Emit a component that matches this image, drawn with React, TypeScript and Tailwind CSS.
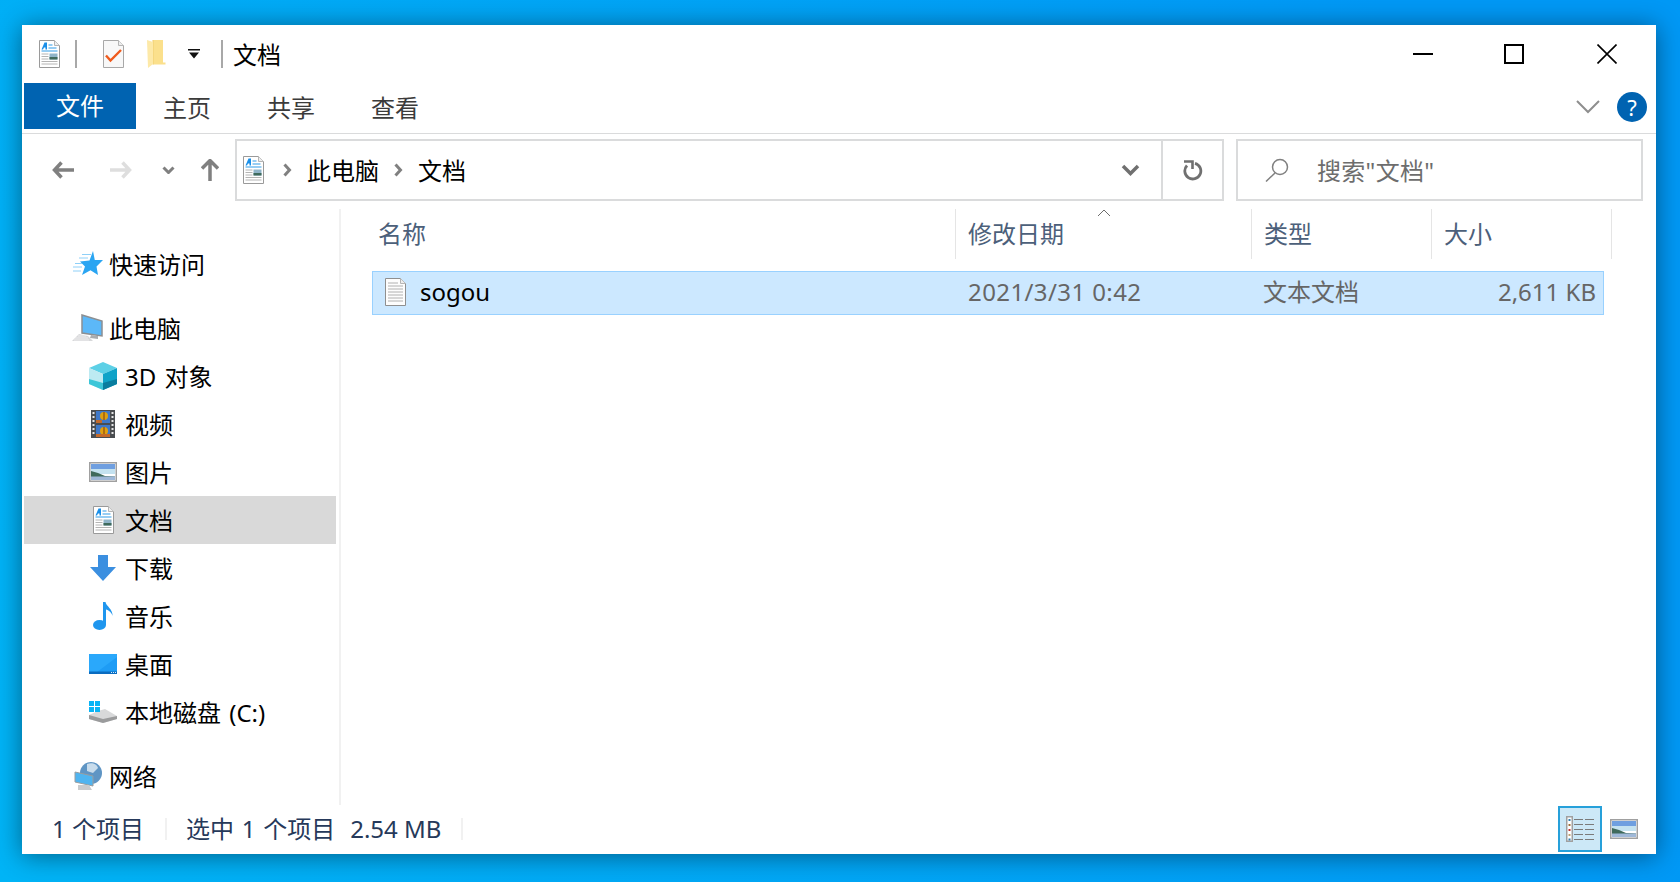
import { FC, ReactNode } from "react";

const font = "font-['Noto_Sans','Noto_Sans_CJK_SC',sans-serif]";

// shell32-ish icons, drawn by hand
const DocIcon: FC<{ className?: string }> = ({ className }) => (
  <svg viewBox="0 0 21 28" className={className} width="21" height="28">
    <path d="M.5.5h15l5 5v22H.5z" fill="#fff" stroke="#9a9a9a" />
    <path d="M15.5.5v5h5" fill="#eee" stroke="#b5b5b5" />
    <path d="M2.500 9.500L5.500 2.500H8V9.500H6.500V7.500H5L4 9.500z" fill="#1a8fe8" />
    <path d="M9.500 5h4M9.500 8h8M2.500 11h16" stroke="#2f9ce8" strokeWidth="1.200" />
    <path d="M2.500 14h7M2.500 16.500h7M2.500 19h7M2.500 21.500h16M2.500 24h16" stroke="#b4b4b4" strokeWidth="1" />
    <rect x="10.500" y="13.500" width="8" height="6" fill="#8fb4c8" />
    <rect x="10.500" y="17" width="8" height="2.500" fill="#3f6a5c" />
  </svg>
);

const TextFileIcon: FC = () => (
  <svg viewBox="0 0 21 28" width="21" height="28" className="mb-[2px] shrink-0">
    <path d="M.5.5h15l5 5v22H.5z" fill="#fdfdfd" stroke="#8f8f8f" />
    <path d="M15.5.5v5h5" fill="#eee" stroke="#b5b5b5" />
    <path d="M3 5h10M3 8h15M3 11h15M3 14h15M3 17h15M3 20h15M3 23h15" stroke="#b0b0b0" />
  </svg>
);

const CheckDoc: FC = () => (
  <svg viewBox="0 0 21 28" width="21" height="28">
    <path d="M.5.5h15l5 5v22H.5z" fill="#f8f8f8" stroke="#a8a8a8" />
    <path d="M15.5.5v5h5" fill="#eee" stroke="#b5b5b5" />
    <path d="M3 15.500l4.500 5L18 10" fill="none" stroke="#ef5a1c" strokeWidth="2.400" />
  </svg>
);

const QuickFolder: FC = () => (
  <svg viewBox="0 0 19 28" width="19" height="28">
    <path d="M0 0h16v22.500H18.500V24.500H6V0z" fill="#fbe08c" />
    <path d="M6 0v24.500" stroke="#f0cd70" />
    <path d="M0 0l6 2v22l-5 4z" fill="#fde9a8" />
  </svg>
);

const NavStar: FC = () => (
  <svg viewBox="0 0 30 26" width="30" height="26">
    <path d="M20 0l1.800 9H30l-6.500 6.500L25 24l-7.500-4.800L9 24l3-8.500L7 10.500l9.500-1z" fill="#2aa5f2" />
    <path d="M0 16h9M2 12.500h7M0 20h8M6 7h9M9 3.500h9" stroke="#8fd0f8" strokeWidth="1" />
  </svg>
);

const PcIcon: FC = () => (
  <svg viewBox="0 0 32 28" width="32" height="28">
    <path d="M10 1l20 6v15l-20-3z" fill="#5cb8f8" stroke="#8c8f92" strokeWidth="1.500" />
    <path d="M19 21l7 1v3l-8-1z" fill="#a9acaf" />
    <path d="M7 20l9 2 5 5H0z" fill="#d7d8da" />
    <path d="M3 24h13M2 26h15M6 22h8" stroke="#f4f4f4" strokeWidth=".8" />
  </svg>
);

const CubeIcon: FC = () => (
  <svg viewBox="0 0 28 28" width="28" height="28">
    <path d="M14 0l14 6-14 6L0 6z" fill="#5dd0e6" />
    <path d="M0 6l14 6v16L0 22z" fill="#bdeaf2" />
    <path d="M28 6L14 12v16l14-6z" fill="#0fa3c8" />
    <path d="M14 21l14-4v5l-14 6z" fill="#0a7d9f" />
    <path d="M0 17l14 4v7L0 22z" fill="#3cc6d8" />
  </svg>
);

const VideoIcon: FC = () => (
  <svg viewBox="0 0 24 28" width="24" height="28">
    <rect width="24" height="28" fill="#4a4d50" />
    <rect x="5" y="1" width="14" height="12" fill="#3f78c8" />
    <rect x="5" y="15" width="14" height="12" fill="#3f78c8" />
    <circle cx="13" cy="6" r="4" fill="#e0a010" />
    <circle cx="13" cy="21" r="4" fill="#e0a010" />
    <path d="M13 2v8M13 17v8" stroke="#7a3a10" />
    <rect x="5" y="10" width="6" height="3" fill="#c46a2a" />
    <rect x="5" y="24" width="14" height="3" fill="#c46a2a" />
    <path d="M2.500 2v24M21.500 2v24" stroke="#e6e6e6" strokeWidth="2" strokeDasharray="2 2" />
  </svg>
);

const Landscape: FC<{ w: number; h: number }> = ({ w, h }) => (
  <svg viewBox="0 0 28 20" width={w} height={h}>
    <rect x=".75" y=".75" width="26.500" height="18.500" fill="#fff" stroke="#a0a0a0" strokeWidth="1.500" />
    <rect x="2" y="2" width="24" height="6" fill="#6f9fe0" />
    <rect x="2" y="7" width="24" height="5" fill="#c4e2f0" />
    <path d="M2 9l7 2 7 3 10 .5V18H2z" fill="#3f6a5c" />
    <rect x="2" y="14.500" width="24" height="3.500" fill="#9fb8d8" />
  </svg>
);

const DownloadIcon: FC = () => (
  <svg viewBox="0 0 26 26" width="26" height="26">
    <path d="M8 0h10v12h8L13 26 0 12h8z" fill="#3b8fe0" />
  </svg>
);

const MusicIcon: FC = () => (
  <svg viewBox="0 0 20 28" width="20" height="28">
    <ellipse cx="6.500" cy="23" rx="6.500" ry="5" fill="#1f96ee" />
    <path d="M10 0h2.500c.5 4 7.500 7 7 14-.4-3-4-6-6.500-6.500V23h-3z" fill="#1f96ee" />
  </svg>
);

const DesktopIcon: FC = () => (
  <svg viewBox="0 0 28 20" width="28" height="20">
    <rect width="28" height="20" fill="#1e9cf5" />
    <path d="M0 0h28v3L8 18H0z" fill="#2aa8fb" />
    <rect y="17.500" width="28" height="2.500" fill="#0a6cc0" />
    <path d="M22 18.500h5" stroke="#d8eefc" strokeDasharray="1 1" />
  </svg>
);

const DiskIcon: FC = () => (
  <svg viewBox="0 0 28 22" width="28" height="22">
    <path d="M0 14l9-4 7-2 12 7v3l-14 4L0 18z" fill="#d8d9da" />
    <path d="M0 14l14 4 14-3v3l-14 4L0 18z" fill="#9a9b9c" />
    <path d="M0 0h5v5H0zM6 0h5v5H6zM0 6h5v5H0zM6 6h5v5H6z" fill="#08b4f6" />
  </svg>
);

const NetIcon: FC = () => (
  <svg viewBox="0 0 28 28" width="28" height="28">
    <circle cx="17" cy="11" r="11" fill="#5f95c4" />
    <path d="M13 2c5-2 10 0 11 4l-5 5-6-2z" fill="#c8dcec" />
    <path d="M1 10l18 4v10L1 20z" fill="#4fb4f0" stroke="#9a9d9f" />
    <path d="M4 23h11l3 5H4z" fill="#c9cbcd" />
  </svg>
);

const Chev: FC<{ d: string; w: number; h: number; color: string; sw?: number; className?: string }> = ({ d, w, h, color, sw = 2, className }) => (
  <svg viewBox={`0 0 ${w} ${h}`} width={w} height={h} className={className}>
    <path d={d} fill="none" stroke={color} strokeWidth={sw} />
  </svg>
);

const Arrow: FC<{ color: string; flip?: boolean }> = ({ color, flip }) => (
  <svg viewBox="0 0 22 18" width="22" height="18" className={flip ? "-scale-x-100" : ""}>
    <path d="M9.500 1.500L2.500 9l7 7.500M3 9h19" fill="none" stroke={color} strokeWidth="3.500" />
  </svg>
);

const TreeRow: FC<{ icon: ReactNode; label: string; child?: boolean; selected?: boolean }> = ({ icon, label, child, selected }) => (
  <div className={`flex h-12 items-center ${selected ? "bg-[#d9d9d9]" : ""} ${child ? "pl-[65px]" : "pl-[48px]"}`}>
    <div className={`flex h-7 shrink-0 items-center justify-center ${child ? "mr-2 w-[28px]" : "mr-[5px] w-[32px]"}`}>{icon}</div>
    <span className="pt-[2px] text-[24px] leading-none text-black [word-spacing:2px]">{label}</span>
  </div>
);

const HeaderCell: FC<{ label: string; className: string; children?: ReactNode }> = ({ label, className, children }) => (
  <div className={`relative flex h-full items-center border-r border-[#e5e5e5] ${className}`}>
    <span className="text-[24px] leading-none text-[#4c607a]">{label}</span>
    {children}
  </div>
);

export default function App() {
  return (
    <div className={`h-[882px] w-[1680px] overflow-hidden bg-[linear-gradient(70deg,#00b4f6,#0098f5_85%)] pl-[22px] pt-[25px] ${font}`}>
      <div className="flex h-[829px] w-[1634px] flex-col bg-white shadow-[0_2px_24px_rgba(0,0,0,0.45)]">
        {/* title bar */}
        <div className="flex h-[58px] shrink-0 items-center pl-[17px]">
          <DocIcon />
          <div className="ml-[15px] h-7 w-[2px] bg-[#a8a8a8]" />
          <div className="ml-[26px]"><CheckDoc /></div>
          <div className="ml-[23px]"><QuickFolder /></div>
          <svg viewBox="0 0 12 10" width="12" height="10" className="ml-[22px]">
            <path d="M0 0h12v1.500H0zM1 3.500h10L6 9.500z" fill="#111" />
          </svg>
          <div className="ml-[21px] h-7 w-[2px] bg-[#a8a8a8]" />
          <span className="ml-[10px] pt-[2px] text-[24px] leading-none text-black">文档</span>
          <div className="ml-auto flex items-center pr-[39px]">
            <div className="h-[2px] w-5 bg-black" />
            <div className="ml-[71px] h-5 w-5 border-2 border-black" />
            <svg viewBox="0 0 20 20" width="20" height="20" className="ml-[73px]">
              <path d="M.5.5l19 19M19.500.5l-19 19" stroke="#000" strokeWidth="1.600" />
            </svg>
          </div>
        </div>

        {/* ribbon tabs */}
        <div className="flex h-[51px] shrink-0 items-start border-b border-[#dadbdc] pl-[2px] pr-[9px] text-[24px] leading-none">
          <div className="flex h-[46px] w-[112px] items-center justify-center bg-[#0063b1] text-white">文件</div>
          <div className="flex h-[46px] w-[104px] items-center justify-center pr-[2px] pt-1 text-[#3b3b3b]">主页</div>
          <div className="flex h-[46px] w-[104px] items-center justify-center pr-[2px] pt-1 text-[#3b3b3b]">共享</div>
          <div className="flex h-[46px] w-[104px] items-center justify-center pr-[2px] pt-1 text-[#3b3b3b]">查看</div>
          <div className="ml-auto flex h-[46px] items-center pt-[2px]">
            <Chev d="M1 1l11 11L23 1" w={24} h={14} color="#8e8e8e" />
            <div className="ml-[17px] flex h-[30px] w-[30px] items-center justify-center rounded-full bg-[#0063b1] text-[22px] text-white">?</div>
          </div>
        </div>

        {/* address row */}
        <div className="mt-[5px] flex h-[62px] shrink-0 items-center">
          <div className="ml-[30px]"><Arrow color="#808080" /></div>
          <div className="ml-[36px]"><Arrow color="#dedede" flip /></div>
          <Chev d="M1.500 1.500l5 5 5-5" w={13} h={8} color="#808080" sw={3} className="ml-[30px]" />
          <svg viewBox="0 0 18 22" width="18" height="22" className="ml-[26px]">
            <path d="M1 9.500L9 1.500l8 8M9 2v20" fill="none" stroke="#808080" strokeWidth="3.500" />
          </svg>
          <div className="ml-[16px] flex h-[62px] w-[989px] items-center border-2 border-[#dadbdc] pl-[6px] text-[24px] leading-none text-black">
            <DocIcon />
            <Chev d="M1.500 1.500l5 5.500-5 5.500" w={9} h={14} color="#808080" sw={3} className="ml-[19px]" />
            <span className="ml-[15px] pt-[2px]">此电脑</span>
            <Chev d="M1.500 1.500l5 5.500-5 5.500" w={9} h={14} color="#808080" sw={3} className="ml-[15px]" />
            <span className="ml-[15px] pt-[2px]">文档</span>
            <Chev d="M2 2l7.500 7.500L17 2" w={19} h={12} color="#707070" sw={3.500} className="ml-auto mr-[21px]" />
            <div className="flex h-full w-[61px] items-center justify-center border-l-2 border-[#dadbdc] pl-[2px]">
              <svg viewBox="0 0 21 21" width="21" height="21">
                <path d="M12 3.300A8 8 0 1 1 4 5.500" fill="none" stroke="#707070" strokeWidth="2.800" />
                <path d="M1 1.500h8.500v7.500" fill="none" stroke="#707070" strokeWidth="2.600" />
              </svg>
            </div>
          </div>
          <div className="ml-[12px] flex h-[62px] w-[407px] items-center border-2 border-[#dadbdc] pl-[27px] text-[24px] leading-none text-[#6d6d6d]">
            <svg viewBox="0 0 24 24" width="24" height="24">
              <circle cx="15" cy="9" r="7.500" fill="none" stroke="#808080" strokeWidth="1.500" />
              <path d="M10 15L1 23.500" stroke="#808080" strokeWidth="1.500" />
            </svg>
            <span className="ml-[28px] pt-[2px] tracking-[0.3px]">搜索"文档"</span>
          </div>
        </div>

        {/* nav pane + file list */}
        <div className="flex min-h-0 flex-1 pt-[8px]">
          <div className="flex w-[319px] shrink-0 flex-col border-r-2 border-[#f1f1f1] pl-[2px] pr-[3px]">
            <div className="mt-[31px]" />
            <TreeRow icon={<NavStar />} label="快速访问" />
            <div className="h-4" />
            <TreeRow icon={<PcIcon />} label="此电脑" />
            <TreeRow child icon={<CubeIcon />} label="3D 对象" />
            <TreeRow child icon={<VideoIcon />} label="视频" />
            <TreeRow child icon={<Landscape w={28} h={20} />} label="图片" />
            <TreeRow child selected icon={<DocIcon />} label="文档" />
            <TreeRow child icon={<DownloadIcon />} label="下载" />
            <TreeRow child icon={<MusicIcon />} label="音乐" />
            <TreeRow child icon={<DesktopIcon />} label="桌面" />
            <TreeRow child icon={<DiskIcon />} label="本地磁盘 (C:)" />
            <div className="h-4" />
            <TreeRow icon={<NetIcon />} label="网络" />
          </div>

          <div className="min-w-0 flex-1">
            <div className="flex h-[50px] pl-[37px]">
              <HeaderCell label="名称" className="w-[578px]" />
              <HeaderCell label="修改日期" className="w-[296px] pl-[12px]">
                <svg viewBox="0 0 14 8" width="14" height="8" className="absolute left-[141px] top-0">
                  <path d="M1 7l6-6 6 6" fill="none" stroke="#6d6d6d" strokeWidth="1" />
                </svg>
              </HeaderCell>
              <HeaderCell label="类型" className="w-[180px] pl-[12px]" />
              <HeaderCell label="大小" className="w-[180px] pl-[12px]" />
            </div>
            <div className="ml-[31px] mt-[12px] flex h-[44px] w-[1232px] items-center border border-[#99d1ff] bg-[#cce8ff] text-[24px] leading-none text-[#666]">
              <div className="flex w-[595px] items-center pl-[12px]">
                <TextFileIcon />
                <span className="ml-[14px] pb-[2px] text-black">sogou</span>
              </div>
              <span className="w-[295px] pb-[2px] tracking-[0.4px]">2021/3/31 0:42</span>
              <span className="w-[180px] pb-[2px]">文本文档</span>
              <span className="w-[153px] pb-[2px] text-right">2,611 KB</span>
            </div>
          </div>
        </div>

        {/* status bar */}
        <div className="flex h-[49px] shrink-0 items-center pb-[2px] pl-[30px] text-[24px] leading-none text-[#26395a]">
          <span>1 个项目</span>
          <div className="ml-[21px] h-[22px] w-[2px] bg-[#f1f1f1]" />
          <span className="ml-[19px] [word-spacing:1.500px]">选中 1 个项目</span>
          <span className="ml-[15px]">2.54 MB</span>
          <div className="ml-[20px] h-[22px] w-[2px] bg-[#f1f1f1]" />
          <div className="ml-auto flex items-center pr-[18px]">
            <div className="flex h-[46px] w-[44px] items-center justify-center border-2 border-[#26a0da] bg-[#cce8f7]">
              <svg viewBox="0 0 28 26" width="28" height="26">
                <rect x=".75" y=".75" width="5.500" height="24.500" fill="#fff" stroke="#a0a0a0" strokeWidth="1.500" />
                <path d="M2.500 3h2v2h-2z" fill="#2f7fb0" />
                <path d="M2.500 8h2v2h-2z" fill="#a0703a" />
                <path d="M2.500 13h2v2h-2z" fill="#c03030" />
                <path d="M2.500 18h2v2h-2z" fill="#c0a070" />
                <path d="M2.500 22.500h2v2h-2z" fill="#2f7fb0" />
                <path d="M8 3.500h9M19 3.500h9M8 8.500h9M19 8.500h9M8 13.500h9M19 13.500h9M8 18.500h9M19 18.500h9M8 23.500h9M19 23.500h9" stroke="#7a7a7a" />
              </svg>
            </div>
            <div className="ml-[8px]"><Landscape w={28} h={20} /></div>
          </div>
        </div>
      </div>
    </div>
  );
}
